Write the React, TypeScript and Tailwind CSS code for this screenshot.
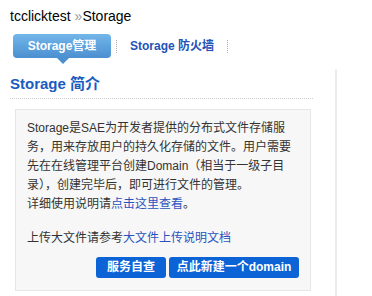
import React from "react"

const font = "font-['Helvetica','Liberation_Sans','Noto_Sans_CJK_SC',sans-serif]"

export default function App() {
    return (
        <div className={`w-[372px] h-[296px] overflow-hidden bg-white text-[#333] ${font}`}>
            <div className="pl-[10px] pt-[7px] text-[14px] leading-[18px] text-black">
                tcclicktest <span className="text-[#999]">»</span>Storage
            </div>

            <div className="flex items-center pl-[13px] mt-[9px] h-[24px]">
                <div className="relative w-[98px] h-[24px] rounded-[4px] bg-gradient-to-b from-[#72b6ea] to-[#4b8fd0] text-white font-bold text-[12px] leading-[24px] text-center">
                    Storage管理
                    <span className="absolute left-[44px] top-[24px] w-0 h-0 border-x-[6px] border-x-transparent border-t-[6px] border-t-[#4b8fd0]" />
                </div>
                <span className="ml-[5px] h-[13px] border-l border-dotted border-[#aaa]" />
                <a className="px-[13px] text-[12px] font-bold text-[#2452b8] leading-[24px]">Storage 防火墙</a>
                <span className="h-[13px] border-l border-dotted border-[#aaa]" />
            </div>

            <div className="flex mt-[11px]">
                <div className="w-[335px] pl-[10px] pt-[5px]">
                    <div className="w-[303px] border-b border-dotted border-[#ccc] pb-[4px]">
                        <h2 className="text-[15px] leading-[20px] font-bold text-[#1a5bbf]">Storage 简介</h2>
                    </div>
                    <div className="mt-[10px] ml-[5px] w-[296px] h-[182px] bg-[#f7f7f7] border border-[#e6e6e6] px-[11px] pt-[9px] text-[12px] leading-[19px]">
                        <p>
                            Storage是SAE为开发者提供的分布式文件存储服务，用来存放用户的持久化存储的文件。用户需要先在在线管理平台创建Domain（相当于一级子目录），创建完毕后，即可进行文件的管理。
                            <br />
                            详细使用说明请<a className="text-[#2a52be]">点击这里查看</a>。
                        </p>
                        <p className="mt-[15px]">
                            上传大文件请参考<a className="text-[#2a52be]">大文件上传说明文档</a>
                        </p>
                        <div className="flex justify-end gap-[3px] mt-[9px]">
                            <button className="w-[70px] h-[21px] rounded-[3px] bg-[#0b63d6] text-white font-bold text-[12px] leading-[21px]">服务自查</button>
                            <button className="w-[130px] h-[21px] rounded-[3px] bg-[#0b63d6] text-white font-bold text-[12px] leading-[21px]">点此新建一个domain</button>
                        </div>
                    </div>
                </div>
                <div className="flex-1 border-l-2 border-[#ececec] h-[240px]" />
            </div>
        </div>
    )
}
